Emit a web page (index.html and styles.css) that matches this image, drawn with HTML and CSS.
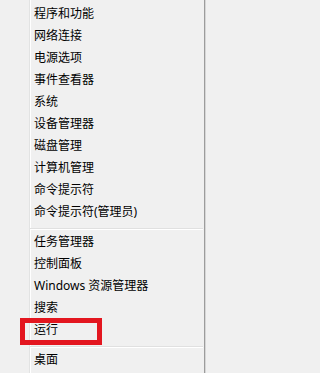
FILE: index.html
```html
<!DOCTYPE html>
<html lang="zh-CN">
<head>
<meta charset="utf-8">
<title>菜单</title>
<link rel="stylesheet" href="styles.css">
</head>
<body>
<div class="menu">
  <div class="gutter"></div>
  <ul class="list">
    <li class="item">程序和功能</li>
    <li class="item">网络连接</li>
    <li class="item">电源选项</li>
    <li class="item">事件查看器</li>
    <li class="item">系统</li>
    <li class="item">设备管理器</li>
    <li class="item">磁盘管理</li>
    <li class="item">计算机管理</li>
    <li class="item">命令提示符</li>
    <li class="item">命令提示符(管理员)</li>
    <li class="sep"></li>
    <li class="item">任务管理器</li>
    <li class="item">控制面板</li>
    <li class="item">Windows 资源管理器</li>
    <li class="item">搜索</li>
    <li class="item marked">运行</li>
    <li class="sep"></li>
    <li class="item">桌面</li>
  </ul>
</div>
</body>
</html>
```
FILE: styles.css
```css
html, body {
  margin: 0;
  padding: 0;
  background: #f0f0f0;
}

.menu {
  width: 206px;
  height: 373px;
  display: flex;
  background: #f0f0f0;
  box-sizing: border-box;
  border-right: 1px solid #d6d6d6;
  font-family: "Noto Sans", "Noto Sans CJK SC", sans-serif;
  font-size: 12px;
  color: #000;
}

.gutter {
  width: 29px;
  flex: none;
}

.list {
  flex: 1;
  margin: 0;
  padding: 3px 0 0 0;
  list-style: none;
  border-left: 1px solid #e2e3e3;
  border-right: 1px solid #9c9c9c;
  box-shadow: inset 1px 0 0 #ffffff;
}

.item {
  height: 22px;
  line-height: 22px;
  padding-left: 4px;
  white-space: nowrap;
  position: relative;
}

.sep {
  height: 8px;
  box-sizing: border-box;
  padding-top: 5px;
  margin-right: 1px;
}

.sep::before {
  content: "";
  display: block;
  height: 1px;
  background: #e0e0e0;
  border-bottom: 1px solid #ffffff;
}

.marked::after {
  content: "";
  position: absolute;
  left: -10px;
  top: -1px;
  width: 82px;
  height: 27px;
  box-sizing: border-box;
  border: 5px solid #e3161f;
}
```
